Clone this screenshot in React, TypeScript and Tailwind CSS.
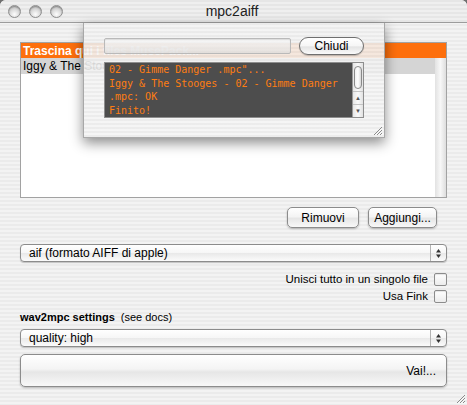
import type { ReactNode } from 'react';

const sans = "font-['Liberation_Sans',Arial,sans-serif]";

function AquaButton({ children, className = '' }: { children: ReactNode; className?: string }) {
  return (
    <button
      className={`flex items-center rounded-[5px] border border-[#8c8c8c] bg-[linear-gradient(180deg,#ffffff_0%,#f4f4f4_45%,#e6e6e6_55%,#f8f8f8_100%)] text-[12px] text-black shadow-[0_1px_2px_rgba(0,0,0,0.25)] ${className}`}
    >
      {children}
    </button>
  );
}

function PopupArrows() {
  return (
    <svg width="7" height="11" viewBox="0 0 7 11">
      <path d="M3.5 1 L6 4.5 L1 4.5 Z" fill="#333" />
      <path d="M3.5 10 L6 6.5 L1 6.5 Z" fill="#333" />
    </svg>
  );
}

function Popup({ label }: { label: string }) {
  return (
    <div className="flex h-[18px] items-center rounded-[4px] border border-[#8c8c8c] bg-[linear-gradient(180deg,#ffffff_0%,#f6f6f6_50%,#e9e9e9_52%,#fbfbfb_100%)] shadow-[0_1px_1px_rgba(0,0,0,0.2)]">
      <span className="flex-1 pl-2 text-[12px] leading-none text-black">{label}</span>
      <span className="flex h-full w-[16px] items-center justify-center border-l border-[#b4b4b4]">
        <PopupArrows />
      </span>
    </div>
  );
}

function Checkbox({ label }: { label: string }) {
  return (
    <div className="flex h-[13px] items-center justify-end gap-[6px]">
      <span className="text-[11.5px] leading-none text-black">{label}</span>
      <span className="h-[13px] w-[13px] rounded-[2px] border border-[#8c8c8c] bg-[linear-gradient(180deg,#ffffff,#ececec)] shadow-[inset_0_1px_1px_rgba(0,0,0,0.1)]" />
    </div>
  );
}

function ResizeGrip() {
  return (
    <svg width="11" height="11" viewBox="0 0 11 11">
      <path d="M10 2 L2 10 M10 5 L5 10 M10 8 L8 10" stroke="#8a8a8a" strokeWidth="1" />
      <path d="M10.5 3 L3 10.5 M10.5 6 L6 10.5 M10.5 9 L9 10.5" stroke="#ffffff" strokeWidth="0.8" />
    </svg>
  );
}

function TrafficLight() {
  return (
    <span className="h-[13px] w-[13px] rounded-full border border-[#8e8e8e] bg-[radial-gradient(circle_at_50%_75%,#fdfdfd_0%,#dcdcdc_45%,#a9a9a9_100%)] shadow-[inset_0_1px_1px_rgba(0,0,0,0.25)]" />
  );
}

export default function App() {
  return (
    <div className={`h-[405px] w-[467px] overflow-hidden bg-[#6f6f6f] ${sans}`}>
      <div className="relative h-full w-full overflow-hidden rounded-t-[6px] bg-[repeating-linear-gradient(180deg,#ebebeb_0px,#ebebeb_2px,#f3f3f3_2px,#f3f3f3_4px)]">
        {/* title bar */}
        <div className="flex h-[23px] items-center border-b border-[#9c9c9c] bg-[repeating-linear-gradient(180deg,#e6e6e6_0px,#e6e6e6_2px,#efefef_2px,#efefef_4px)] px-[8px]">
          <div className="flex gap-[8px]">
            <TrafficLight />
            <TrafficLight />
            <TrafficLight />
          </div>
          <div className="flex-1 pr-[58px] text-center text-[14px] leading-none text-[#222]">mpc2aiff</div>
        </div>

        <div className="px-[20px] pt-[19px]">
          {/* file list */}
          <div className="flex h-[156px] flex-col border border-[#a2a2a2] bg-white">
            <div className="flex h-[15px] items-center bg-[#fd6f0c] pl-[2px] text-[12px] font-bold leading-none text-white">
              Trascina qui i files MusePack...
            </div>
            <div className="flex flex-1">
              <div className="flex-1">
                <div className="flex h-[16px] items-center bg-[#d5d5d5] pl-[2px] text-[12px] leading-none text-black">
                  Iggy &amp; The Stooges
                </div>
              </div>
              <div className="w-[11px] bg-[linear-gradient(90deg,#e2e2e2,#f7f7f7_50%,#dedede)]" />
            </div>
          </div>

          <div className="mt-[9px] flex justify-end gap-[9px] pr-[10px]">
            <AquaButton className="h-[21px] w-[72px] justify-center">Rimuovi</AquaButton>
            <AquaButton className="h-[21px] w-[69px] justify-center">Aggiungi...</AquaButton>
          </div>

          <div className="mt-[16px]">
            <Popup label="aif (formato AIFF di apple)" />
          </div>

          <div className="mt-[11px] flex flex-col gap-[4px]">
            <Checkbox label="Unisci tutto in un singolo file" />
            <Checkbox label="Usa Fink" />
          </div>

          <div className="mt-[9px] flex items-baseline gap-[6px] text-[11px] leading-none text-black">
            <span className="font-bold">wav2mpc settings</span>
            <span>(see docs)</span>
          </div>

          <div className="mt-[6px]">
            <Popup label="quality: high" />
          </div>

          <AquaButton className="mt-[7px] h-[33px] w-full justify-end pr-[10px] bg-[linear-gradient(180deg,#fafafa_0%,#efefef_40%,#e4e4e4_60%,#f0f0f0_100%)]">
            Vai!...
          </AquaButton>
        </div>

        <div className="absolute bottom-[1px] right-[1px]">
          <ResizeGrip />
        </div>

        {/* progress sheet */}
        <div className="absolute left-[83px] top-[23px] h-[115px] w-[302px] border-x border-b border-[#a8a8a8] bg-[repeating-linear-gradient(180deg,rgba(234,234,234,0.9)_0px,rgba(234,234,234,0.9)_2px,rgba(244,244,244,0.9)_2px,rgba(244,244,244,0.9)_4px)] shadow-[0_5px_12px_rgba(0,0,0,0.45)]">
          <div className="ml-[20px] mt-[14px] flex items-center gap-[8px]">
            <div className="h-[16px] w-[187px] rounded-[2px] border border-[#b9b9b9] bg-[linear-gradient(180deg,rgba(250,250,250,0.7),rgba(222,222,222,0.7))] shadow-[inset_0_1px_1px_rgba(0,0,0,0.1)]" />
            <button className="flex h-[18px] w-[65px] items-center justify-center rounded-full border border-[#6f6f6f] bg-[linear-gradient(180deg,#ffffff_0%,#f6f6f6_50%,#e4e4e4_55%,#fafafa_100%)] text-[12px] leading-none text-black shadow-[0_1px_1px_rgba(0,0,0,0.2)]">
              Chiudi
            </button>
          </div>

          <div className="ml-[20px] mt-[7px] flex h-[56px] w-[260px] border border-[#8e8e8e] bg-[#4d4d4d]">
            <div className="flex-1 overflow-hidden pl-[4px] font-['DejaVu_Sans_Mono',monospace] text-[10px] leading-[13.5px] text-[#ff7d12]">
              <div>02 - Gimme Danger .mpc"...</div>
              <div>Iggy &amp; The Stooges - 02 - Gimme Danger</div>
              <div>.mpc: OK</div>
              <div>Finito!</div>
            </div>
            <div className="relative flex w-[11px] flex-col border-l border-[#9a9a9a] bg-[linear-gradient(90deg,#e6e6e6,#fafafa_50%,#e2e2e2)]">
              <div className="mx-auto mt-[3px] h-[23px] w-[8px] rounded-full border border-[#8a8a8a] bg-[linear-gradient(90deg,#f0f0f0,#ffffff_50%,#d8d8d8)]" />
              <div className="mt-auto flex h-[13px] items-center justify-center border-t border-[#c4c4c4] text-[6px] leading-none text-[#555]">▲</div>
              <div className="flex h-[13px] items-center justify-center border-t border-[#c4c4c4] text-[6px] leading-none text-[#555]">▼</div>
            </div>
          </div>

          <div className="absolute bottom-[1px] right-[1px]">
            <ResizeGrip />
          </div>
        </div>
      </div>
    </div>
  );
}
